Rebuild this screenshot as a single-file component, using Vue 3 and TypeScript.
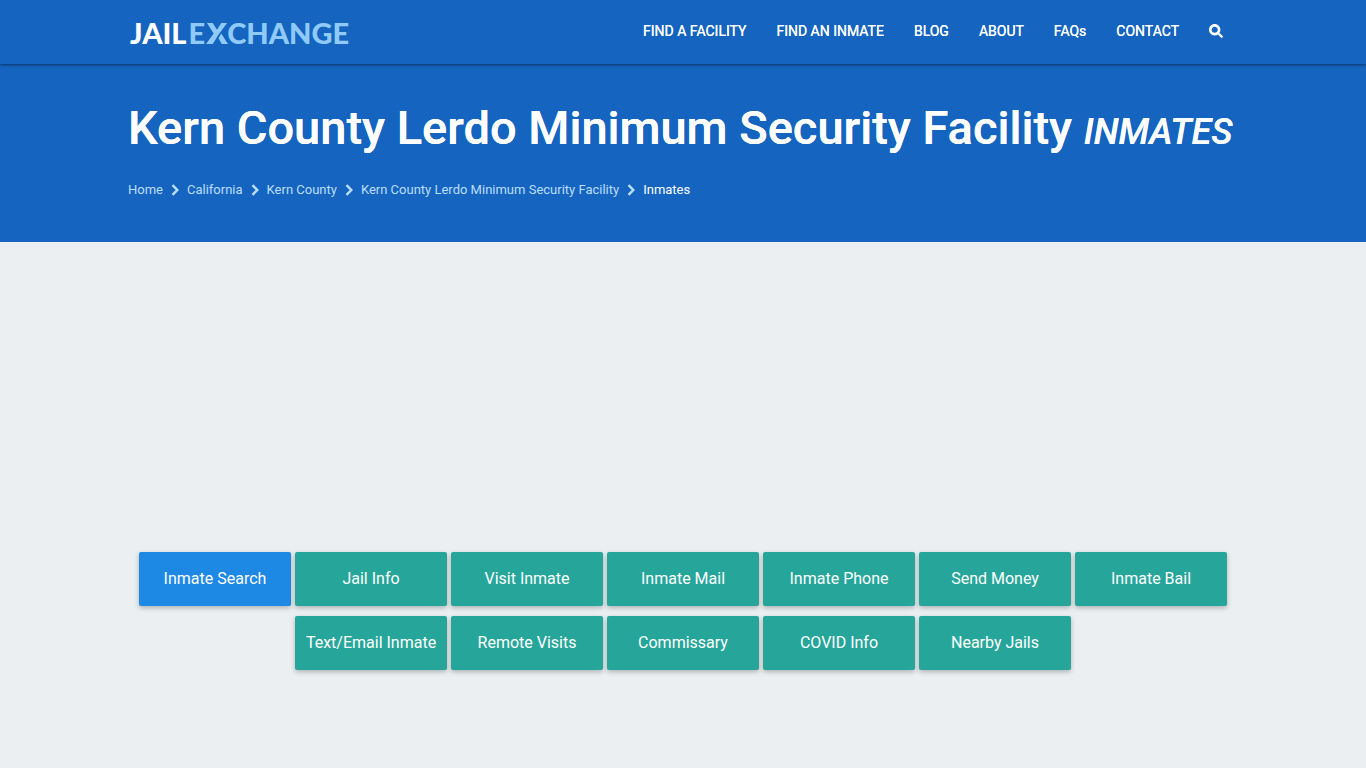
<script setup lang="ts">
const navItems: string[] = ['FIND A FACILITY', 'FIND AN INMATE', 'BLOG', 'ABOUT', 'FAQs', 'CONTACT']

const crumbs: string[] = ['Home', 'California', 'Kern County', 'Kern County Lerdo Minimum Security Facility']

const actions: string[] = [
  'Inmate Search',
  'Jail Info',
  'Visit Inmate',
  'Inmate Mail',
  'Inmate Phone',
  'Send Money',
  'Inmate Bail',
  'Text/Email Inmate',
  'Remote Visits',
  'Commissary',
  'COVID Info',
  'Nearby Jails',
]
</script>

<template>
  <div class="page">
    <header class="topbar">
      <div class="container topbar-inner">
        <a href="#" class="logo" aria-label="Jail Exchange">
          <span class="logo-jail">JAIL</span>
          <span class="logo-ex">E</span>
          <svg class="logo-x" viewBox="0 0 23 22" aria-hidden="true">
            <path d="M1 0H7L11.500 7L16 0H22L14 11L12 14L9.500 18L7 22H0L8 11Z M16 11L23 22H16.500L13 16Z" />
          </svg>
          <span class="logo-ex">CHANGE</span>
        </a>
        <nav class="nav" aria-label="Main">
          <a v-for="item in navItems" :key="item" href="#">{{ item }}</a>
          <a href="#" class="search" aria-label="Search">
            <svg viewBox="0 0 512 512" aria-hidden="true">
              <path d="M505 442.700L405.300 343c-4.500-4.500-10.600-7-17-7H372c27.600-35.300 44-79.700 44-128C416 93.100 322.900 0 208 0S0 93.100 0 208s93.100 208 208 208c48.300 0 92.700-16.400 128-44v16.300c0 6.400 2.500 12.500 7 17l99.700 99.700c9.400 9.400 24.600 9.400 33.900 0l28.300-28.300c9.400-9.400 9.400-24.600.1-34zM208 320c-62 0-112-50-112-112 0-62 50-112 112-112 62 0 112 50 112 112 0 62-50 112-112 112z" />
            </svg>
          </a>
        </nav>
      </div>
    </header>

    <section class="hero">
      <div class="container">
        <h1>Kern County Lerdo Minimum Security Facility <em>INMATES</em></h1>
        <nav class="crumbs" aria-label="Breadcrumb">
          <template v-for="crumb in crumbs" :key="crumb">
            <a href="#">{{ crumb }}</a>
            <svg viewBox="0 0 8 12" aria-hidden="true"><path d="M1.500 1.200L6.300 6L1.500 10.800" /></svg>
          </template>
          <a href="#" aria-current="page">Inmates</a>
        </nav>
      </div>
    </section>

    <main class="container">
      <div class="actions">
        <a v-for="(action, i) in actions" :key="action" href="#" class="btn" :class="{ active: i === 0 }">{{ action }}</a>
      </div>
    </main>
  </div>
</template>

<style>
body {
  margin: 0;
  background: #eceff1;
}
</style>

<style scoped>
.page {
  min-height: 100vh;
  box-sizing: border-box;
  background: #eceff1;
  font-family: Roboto, "Liberation Sans", sans-serif;
}
a {
  text-decoration: none;
  color: inherit;
}
.container {
  max-width: 1110px;
  margin: 0 auto;
}
.topbar {
  position: relative;
  background: #1565c0;
  box-shadow: 0 1px 3px rgba(0, 0, 0, 0.5);
}
.topbar-inner {
  display: flex;
  align-items: center;
  justify-content: space-between;
  height: 64px;
}
.logo {
  display: flex;
  align-items: center;
  padding: 2px 0 0 2px;
  font: 900 29px/40px Lato, "Open Sans", sans-serif;
}
.logo-jail {
  color: #fff;
  margin-right: 2px;
}
.logo-ex {
  color: #90caf9;
}
.logo-x {
  width: 22px;
  height: 21px;
  margin: 0 -1px 0 1px;
  fill: #90caf9;
}
.nav {
  display: flex;
  align-items: center;
  color: #fff;
  font-size: 14px;
  line-height: 62px;
  padding-bottom: 2px;
  text-shadow: 0 0 0 #fff;
}
.nav a {
  padding: 0 15px;
}
.search svg {
  display: block;
  width: 14px;
  height: 14px;
  fill: #fff;
}
.hero {
  background: #1565c0;
  padding: 32px 0 42px;
}
h1 {
  margin: 0;
  color: #fff;
  font-size: 47px;
  font-weight: 500;
  line-height: 64px;
  white-space: nowrap;
  text-shadow: 0 0 0 #fff;
}
h1 em {
  font-size: 36px;
}
.crumbs {
  display: flex;
  align-items: center;
  gap: 8px;
  margin-top: 16px;
  color: #bbdefb;
  font-size: 13px;
  line-height: 20px;
}
.crumbs svg {
  width: 8px;
  height: 12px;
  fill: none;
  stroke: #bbdefb;
  stroke-width: 2.4;
}
.crumbs a[aria-current] {
  color: #fff;
}
.actions {
  display: flex;
  flex-wrap: wrap;
  justify-content: center;
  gap: 10px 4px;
  padding: 310px 0 98px;
}
.btn {
  width: 152px;
  border-radius: 2px;
  background: #26a69a;
  color: #fff;
  font-size: 16px;
  line-height: 54px;
  text-align: center;
  box-shadow: 0 2px 5px rgba(0, 0, 0, 0.26);
}
.btn.active {
  background: #1e88e5;
}
</style>
